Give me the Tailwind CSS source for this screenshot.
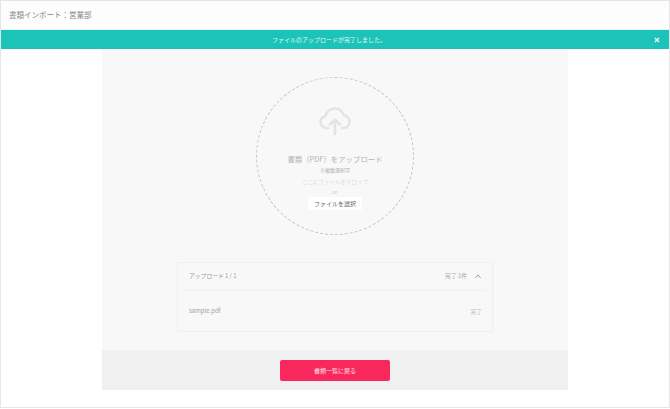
<!doctype html>
<html lang="ja">
<head>
<meta charset="utf-8">
<script src="https://cdn.jsdelivr.net/npm/@tailwindcss/browser@4"></script>
</head>
<body class="m-0 bg-white font-['Noto_Sans_CJK_JP','Noto_Sans',sans-serif]">
<div class="w-[670px] h-[408px] border border-[#e6e6e6] bg-white flex flex-col overflow-hidden">
  <header class="h-[28px] shrink-0 bg-[#fdfdfd] flex items-center pl-[8px] text-[7.5px] text-[#858585]">書類インポート：営業部</header>
  <div class="h-[20px] shrink-0 border-t border-[#e3f5f3] bg-[#1cc3b8] relative flex items-center justify-center pr-[12px] text-[6px] text-white/85">
    ファイルのアップロードが完了しました。
    <svg class="absolute left-[653px] top-[7px] w-[6px] h-[6px]" viewBox="0 0 6 6" fill="none" stroke="#ffffff" stroke-width="1.2"><path d="M1 1 L5 5 M5 1 L1 5"/></svg>
  </div>
  <main class="w-[466px] ml-[101px] shrink-0 flex flex-col">
    <section class="h-[301px] bg-[#f8f8f8] flex flex-col items-center pt-[28px]">
      <div class="w-[158px] h-[158px] rounded-full border border-dashed border-[#c4c4c4] flex flex-col items-center shrink-0">
        <svg class="mt-[29px] w-[32px] h-[28px] shrink-0" viewBox="0 0 32 28" fill="none" stroke="#e4e4e4" stroke-width="2.6" stroke-linecap="round" stroke-linejoin="round">
          <path d="M9 21 H7.5 C4 21 1.5 18.3 1.5 15 C1.5 12 3.6 9.8 6.4 9.3 C7.2 4.8 11 1.5 15.8 1.5 C20.2 1.5 23.8 4.4 24.8 8.4 C28 8.8 30.5 11.4 30.5 14.8 C30.5 18.4 27.8 21 24.5 21 H23"/>
          <path d="M16 27 V13 M11 17.5 L16 12.5 L21 17.5"/>
        </svg>
        <div class="mt-[17px] h-[13px] leading-[13px] text-[7.4px] text-[#b4b4b4] whitespace-nowrap">書類（PDF）をアップロード</div>
        <div class="h-[9px] leading-[9px] text-[5px] text-[#adadad] whitespace-nowrap">※複数選択可</div>
        <div class="mt-[4px] h-[9px] leading-[9px] text-[5.5px] text-[#dcdcdc] whitespace-nowrap">ここにファイルをドロップ</div>
        <div class="mt-[1px] h-[8px] leading-[8px] text-[5px] text-[#c8c8c8]">or</div>
        <div class="mt-[1px] w-[54px] h-[13px] bg-white rounded-[1px] flex items-center justify-center text-[6px] text-[#666666] whitespace-nowrap">ファイルを選択</div>
      </div>
      <div class="mt-[27px] w-[316px] h-[70px] border border-[#f0f0f0] px-[6px] flex flex-col shrink-0">
        <div class="h-[28px] border-b border-[#f0f0f0] flex items-center justify-between px-[5px] shrink-0">
          <span class="text-[5.8px] text-[#999999]">アップロード 1 / 1</span>
          <div class="flex items-center gap-[8px]">
            <span class="text-[5.8px] text-[#a6a6a6]">完了 1件</span>
            <svg class="w-[6px] h-[5px] mb-[1px]" viewBox="0 0 6 5" fill="none" stroke="#9a9a9a" stroke-width="1"><path d="M0.4 4 L3 1 L5.6 4"/></svg>
          </div>
        </div>
        <div class="flex justify-between pl-[5px] pr-[4px] pt-[15px]">
          <span class="text-[6px] leading-[9px] text-[#a0a0a0]">sample.pdf</span>
          <span class="text-[5.8px] leading-[9px] mt-[1px] text-[#bdbdbd]">完了</span>
        </div>
      </div>
    </section>
    <footer class="h-[40px] bg-[#f0f0f0] flex items-center justify-center">
      <div class="w-[110px] h-[21px] rounded-[2px] bg-[#f9285c] flex items-center justify-center text-[6px] text-white/85">書類一覧に戻る</div>
    </footer>
  </main>
</div>
</body>
</html>
